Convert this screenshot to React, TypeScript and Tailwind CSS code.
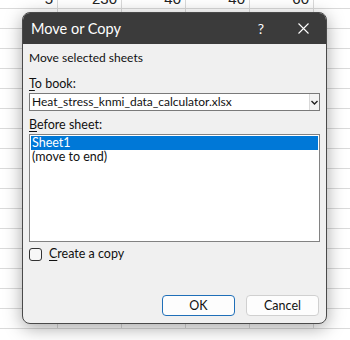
const top = ['5', '230', '40', '40', '60'];
const bottom = ['22', '320', '10', '20', '30'];

function Row({ values }: { values?: string[] }) {
  return (
    <div className="flex h-[20px] shrink-0 border-b border-[#dadada]">
      {[0, 1, 2, 3, 4, 5].map((i) => (
        <div
          key={i}
          className="w-[64px] shrink-0 border-r border-[#dadada] pr-[4px] text-right text-[15px] leading-[20px] text-[#222]"
        >
          {values?.[i] ?? ''}
        </div>
      ))}
    </div>
  );
}

function Chevron() {
  return (
    <svg width="7" height="5" viewBox="0 0 7 5">
      <path d="M0.5 1 L3.5 4 L6.5 1" stroke="#222" strokeWidth="1.4" fill="none" />
    </svg>
  );
}

export default function App() {
  const rows = Array.from({ length: 15 });
  return (
    <div
      className="relative h-[340px] w-[350px] overflow-hidden bg-white"
      style={{ fontFamily: 'Lato, "Noto Sans", sans-serif' }}
    >
      {/* Sheet grid behind the dialog */}
      <div className="ml-[-6px] mt-[-11px] flex flex-col" style={{ fontFamily: '"Liberation Sans", sans-serif' }}>
        <Row values={top} />
        {rows.map((_, i) => (
          <Row key={i} />
        ))}
        <Row values={bottom} />
      </div>

      {/* Dialog */}
      <div className="absolute left-[22px] top-[12px] flex h-[312px] w-[305px] flex-col overflow-hidden rounded-[8px] border border-[#4a4a4a] bg-[#f0f0f0] shadow-[0_4px_18px_rgba(0,0,0,0.35)]">
        <div className="flex h-[31px] shrink-0 items-center bg-[#3b3b3b] pl-[8px] text-[14.5px] text-white">
          <span className="flex-1">Move or Copy</span>
          <span className="mr-[34px] text-[14px]">?</span>
          <svg width="11" height="11" viewBox="0 0 11 11" className="mr-[17px]">
            <path d="M0.5 0.5 L10.5 10.5 M10.5 0.5 L0.5 10.5" stroke="#fff" strokeWidth="1.1" />
          </svg>
        </div>

        <div className="flex flex-1 flex-col px-[6px] text-[12.5px] text-[#111]">
          <div className="mt-[6px] h-[16px] text-[12px] leading-[16px]">Move selected sheets</div>

          <div className="mt-[10px] h-[16px] leading-[16px]">
            <span className="underline underline-offset-2">T</span>o book:
          </div>
          <div className="mt-[1px] flex h-[18px] items-center border border-[#7a7a7a] bg-white">
            <span className="flex-1 pl-[2px] text-[12px] leading-[16px]">Heat_stress_knmi_data_calculator.xlsx</span>
            <div className="flex h-full w-[10px] items-center justify-center border-l border-[#d9d9d9] bg-[#f4f4f4]">
              <Chevron />
            </div>
          </div>

          <div className="mt-[6px] h-[16px] leading-[16px]">
            <span className="underline underline-offset-2">B</span>efore sheet:
          </div>
          <div className="mt-[1px] h-[108px] border border-[#828282] bg-white p-[1px]">
            <div className="h-[14px] bg-[#0078d7] pl-[1px] leading-[14px] text-white">Sheet1</div>
            <div className="h-[14px] pl-[1px] leading-[14px]">(move to end)</div>
          </div>

          <div className="mt-[5px] flex h-[14px] items-center">
            <div className="h-[13px] w-[13px] rounded-[3px] border border-[#333] bg-[#f7f7f7]" />
            <span className="ml-[7px] leading-[14px]">
              <span className="underline underline-offset-2">C</span>reate a copy
            </span>
          </div>

          <div className="mt-auto mb-[7px] flex justify-end gap-[11px] pr-[1px]">
            <button className="h-[21px] w-[73px] rounded-[4px] border border-[#1f6fb8] bg-[#fdfdfd] text-[12.5px] leading-[19px]">
              OK
            </button>
            <button className="h-[21px] w-[73px] rounded-[4px] border border-[#d0d0d0] bg-[#fdfdfd] text-[12.5px] leading-[19px]">
              Cancel
            </button>
          </div>
        </div>
      </div>
    </div>
  );
}
